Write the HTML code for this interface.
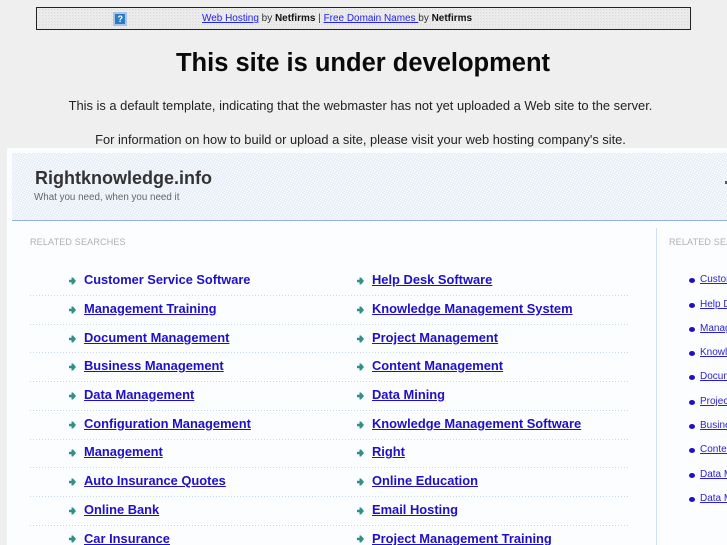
<!DOCTYPE html>
<html><head><meta charset="utf-8"><style>
html,body{margin:0;padding:0}
body{width:727px;height:545px;overflow:hidden;position:relative;background:#efefef;font-family:"Liberation Sans",sans-serif}
#w{position:absolute;left:0;top:0;width:727px;height:545px;overflow:hidden;filter:blur(.3px)}
.a{position:absolute;white-space:nowrap}
.c{left:0;text-align:center}
a{color:#2323ee}
.l{font-size:12.9px;font-weight:bold;color:#1f0fc8;text-decoration:none;line-height:16px}
.u{text-decoration:underline}
.s{font-size:10px;color:#2a1fd0;text-decoration:underline;line-height:13px}
.b{position:absolute;left:689px;width:6px;height:5px;border-radius:50%;background:#1f0fc8}
.h{font-size:9px;color:#b0b0b0;letter-spacing:.18px;line-height:11px}
</style></head><body><div id="w">
<svg class="a" style="left:0;top:0" width="727" height="545"><defs>
<pattern id="g" width="3" height="3" patternUnits="userSpaceOnUse"><rect width="3" height="3" fill="#ececec"/><rect width="1" height="1" fill="#d8d8d8"/><rect x="1" y="1" width="1" height="1" fill="#e2e2e2"/></pattern>
<pattern id="h" width="5" height="5" patternUnits="userSpaceOnUse"><rect width="5" height="5" fill="#e9f0fa"/><rect width="1" height="1" fill="#fff"/><rect x="2" y="1" width="1" height="1" fill="#fff"/><rect x="4" y="2" width="1" height="1" fill="#fff"/><rect x="1" y="3" width="1" height="1" fill="#fff"/><rect x="3" y="4" width="1" height="1" fill="#fff"/></pattern>
</defs>
<rect x="36.5" y="7.5" width="654" height="22" fill="url(#g)" stroke="#222"/>
<rect x="7" y="148" width="720" height="397" fill="#fcfdff"/>
<rect x="12" y="153" width="715" height="68" fill="url(#h)"/>
<rect x="12" y="220" width="715" height="1" fill="#95b2e6"/>
<rect x="656" y="228" width="1" height="317" fill="#cfe0f4"/>
<rect x="113" y="12" width="14" height="14" fill="#a9c4e4"/><rect x="115" y="14" width="10" height="10" fill="#2a7cc4"/>
<g stroke="#c3d8ea" stroke-dasharray="1 2">
<path d="M30 295.5H628M30 324.5H628M30 352.5H628M30 381.5H628M30 410.5H628M30 439.5H628M30 467.5H628M30 496.5H628M30 525.5H628"/>
</g>
<defs><path id="p" d="M0 -1.2H2.5V-3.5H4L7 0L4 3.5H2.5V1.2H0Z" fill="#2f8f8a"/></defs>
<use href="#p" x="69" y="281"/><use href="#p" x="69" y="310"/><use href="#p" x="69" y="339"/><use href="#p" x="69" y="367"/><use href="#p" x="69" y="396"/><use href="#p" x="69" y="425"/><use href="#p" x="69" y="453"/><use href="#p" x="69" y="482"/><use href="#p" x="69" y="511"/><use href="#p" x="69" y="539"/>
<use href="#p" x="357" y="281"/><use href="#p" x="357" y="310"/><use href="#p" x="357" y="339"/><use href="#p" x="357" y="367"/><use href="#p" x="357" y="396"/><use href="#p" x="357" y="425"/><use href="#p" x="357" y="453"/><use href="#p" x="357" y="482"/><use href="#p" x="357" y="511"/><use href="#p" x="357" y="539"/>
</svg>
<div class="a" style="left:117.5px;top:13px;font-size:9px;font-weight:bold;color:#fff;line-height:12px">?</div>
<div class="a" style="left:202px;top:12px;font-size:9.97px;line-height:13px;color:#333"><a href="#">Web Hosting</a> by <b style="color:#111">Netfirms</b> | <a href="#">Free Domain Names </a> by <b style="color:#111">Netfirms</b></div>
<div class="a c" style="top:47px;width:726px;font-size:25.5px;font-weight:bold;color:#0a0a0a;line-height:32px">This site is under development</div>
<div class="a c" style="top:98px;width:721px;font-size:12.9px;color:#222;line-height:16px">This is a default template, indicating that the webmaster has not yet uploaded a Web site to the server.</div>
<div class="a c" style="top:132px;width:721px;font-size:12.85px;color:#222;line-height:16px">For information on how to build or upload a site, please visit your web hosting company's site.</div>
<div class="a" style="left:35px;top:166px;font-size:18px;font-weight:bold;color:#333;line-height:24px">Rightknowledge.info</div>
<div class="a" style="left:34px;top:192px;font-size:9.8px;color:#666;line-height:12px">What you need, when you need it</div>
<div class="a" style="left:725px;top:181px;width:2px;height:3px;background:#555"></div>
<div class="a h" style="left:30px;top:237px">RELATED SEARCHES</div>
<div class="a h" style="left:669px;top:237px">RELATED SEARCHES</div>

<a class="a l" href="#" style="left:84px;top:272px;font-size:12.8px">Customer Service Software</a>
<a class="a l u" href="#" style="left:84px;top:301px">Management Training</a>
<a class="a l u" href="#" style="left:84px;top:330px">Document Management</a>
<a class="a l u" href="#" style="left:84px;top:358px">Business Management</a>
<a class="a l u" href="#" style="left:84px;top:387px">Data Management</a>
<a class="a l u" href="#" style="left:84px;top:416px">Configuration Management</a>
<a class="a l u" href="#" style="left:84px;top:444px">Management</a>
<a class="a l u" href="#" style="left:84px;top:473px">Auto Insurance Quotes</a>
<a class="a l u" href="#" style="left:84px;top:502px">Online Bank</a>
<a class="a l u" href="#" style="left:84px;top:531px">Car Insurance</a>

<a class="a l u" href="#" style="left:372px;top:272px">Help Desk Software</a>
<a class="a l u" href="#" style="left:372px;top:301px">Knowledge Management System</a>
<a class="a l u" href="#" style="left:372px;top:330px">Project Management</a>
<a class="a l u" href="#" style="left:372px;top:358px">Content Management</a>
<a class="a l u" href="#" style="left:372px;top:387px">Data Mining</a>
<a class="a l u" href="#" style="left:372px;top:416px">Knowledge Management Software</a>
<a class="a l u" href="#" style="left:372px;top:444px">Right</a>
<a class="a l u" href="#" style="left:372px;top:473px">Online Education</a>
<a class="a l u" href="#" style="left:372px;top:502px">Email Hosting</a>
<a class="a l u" href="#" style="left:372px;top:531px">Project Management Training</a>

<div class="b" style="top:278px"></div><div class="b" style="top:303px"></div><div class="b" style="top:327px"></div><div class="b" style="top:351px"></div><div class="b" style="top:375px"></div><div class="b" style="top:400px"></div><div class="b" style="top:424px"></div><div class="b" style="top:448px"></div><div class="b" style="top:473px"></div><div class="b" style="top:497px"></div>
<a class="a s" href="#" style="left:700px;top:273px">Customer</a>
<a class="a s" href="#" style="left:700px;top:298px">Help Desk</a>
<a class="a s" href="#" style="left:700px;top:322px">Management</a>
<a class="a s" href="#" style="left:700px;top:346px">Knowledge</a>
<a class="a s" href="#" style="left:700px;top:370px">Document</a>
<a class="a s" href="#" style="left:700px;top:395px">Project</a>
<a class="a s" href="#" style="left:700px;top:419px">Business</a>
<a class="a s" href="#" style="left:700px;top:443px">Content</a>
<a class="a s" href="#" style="left:700px;top:468px">Data Mining</a>
<a class="a s" href="#" style="left:700px;top:492px">Data Mining</a>
</div></body></html>
